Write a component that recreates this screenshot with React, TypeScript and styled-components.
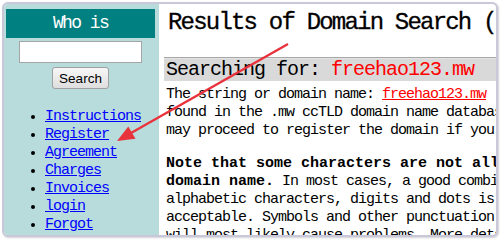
import * as React from "react";
import styled, { createGlobalStyle } from "styled-components";

const GlobalStyle = createGlobalStyle`
  html, body {
    margin: 0;
    padding: 0;
    background: #ffffff;
    width: 500px;
    height: 240px;
    overflow: hidden;
  }
`;

const MONO = `"Liberation Mono", "Courier New", monospace`;

const Frame = styled.div`
  position: relative;
  box-sizing: border-box;
  margin: 2px 0 0 2px;
  width: 496px;
  height: 235px;
  border: 2px solid #c8c8d8;
  border-radius: 6px;
  box-shadow: 1px 1px 2px rgba(120, 120, 140, 0.35);
  overflow: hidden;
  display: flex;
  background: #ffffff;
`;

const Sidebar = styled.div`
  flex: 0 0 155px;
  box-sizing: border-box;
  background: #b8dcdc;
  padding: 5px 4px 0 2px;
  display: flex;
  flex-direction: column;
  align-items: center;

  & > * {
    flex-shrink: 0;
  }
`;

const SideHeader = styled.div`
  align-self: stretch;
  height: 29px;
  background: #008080;
  color: #ffffff;
  font-family: ${MONO};
  font-size: 18px;
  letter-spacing: -1.6px;
  line-height: 29px;
  text-align: center;
  white-space: pre;
`;

const SearchInput = styled.input`
  box-sizing: border-box;
  width: 123px;
  height: 22px;
  margin: 3px 0 0 0;
  border: 1px solid #a5a5a5;
  background: #ffffff;
  padding: 0 3px;
`;

const SearchButton = styled.button`
  box-sizing: border-box;
  width: 57px;
  height: 22px;
  margin-top: 4px;
  border: 1px solid #a0a0a0;
  border-radius: 3px;
  background: linear-gradient(#f7f7f7, #dedede);
  font-family: "Liberation Sans", Arial, sans-serif;
  font-size: 13.5px;
  color: #000000;
  padding: 0;
`;

const NavList = styled.ul`
  align-self: stretch;
  margin: 19px 0 0 0;
  padding: 0 0 0 39px;
  font-family: ${MONO};
  font-size: 15px;
  letter-spacing: -1px;
  line-height: 18px;
  list-style: disc;
`;

const NavItem = styled.li`
  &::marker {
    font-size: 13px;
  }
`;

const NavLink = styled.a`
  color: #0000ff;
  text-decoration: underline;
`;

const Main = styled.div`
  flex: 1;
  min-width: 0;
  padding: 4px 0 0 5px;
  font-family: ${MONO};
  color: #000000;
`;

const Title = styled.h1`
  margin: 0 0 0 4px;
  font-size: 24px;
  font-weight: normal;
  letter-spacing: -1.8px;
  line-height: 30px;
  white-space: nowrap;
  -webkit-text-stroke: 0.3px #000000;
`;

const Rule = styled.div`
  margin-top: 19px;
  height: 1px;
  border-top: 1px solid #a8a8a8;
  background: #e2e2e2;
`;

const Band = styled.div`
  height: 22px;
  background: #d9d9d9;
  padding-left: 2px;
  font-size: 20px;
  letter-spacing: -1px;
  line-height: 22px;
  white-space: nowrap;
`;

const Red = styled.span`
  color: #ff0000;
`;

const Para = styled.div<{ $gap?: number }>`
  margin-top: ${p => p.$gap ?? 0}px;
  padding-left: 2px;
  font-size: 15px;
  letter-spacing: -1px;
  line-height: 18px;
`;

const Line = styled.div`
  white-space: nowrap;
`;

const Strong = styled.b`
  letter-spacing: 0;
`;

const RedLink = styled.a`
  color: #ff0000;
  text-decoration: underline;
`;

const Arrow = styled.svg`
  position: absolute;
  left: -4px;
  top: -4px;
  width: 500px;
  height: 240px;
  pointer-events: none;
`;

const links = [
  "Instructions",
  "Register",
  "Agreement",
  "Charges",
  "Invoices",
  "login",
  "Forgot",
  "Password"
];

export default function App() {
  return (
    <>
      <GlobalStyle />
      <Frame>
        <Sidebar>
          <SideHeader>Who is</SideHeader>
          <SearchInput type="text" />
          <SearchButton type="button">Search</SearchButton>
          <NavList>
            {links.map(l => (
              <NavItem key={l}>
                <NavLink href="#">{l}</NavLink>
              </NavItem>
            ))}
          </NavList>
        </Sidebar>
        <Main>
          <Title>Results of Domain Search (freehao123.mw)</Title>
          <Rule />
          <Band>
            Searching for: <Red>freehao123.mw</Red>
          </Band>
          <Para $gap={5}>
            <Line>
              The string or domain name: <RedLink href="#">freehao123.mw</RedLink>
            </Line>
            <Line>found in the .mw ccTLD domain name database.</Line>
            <Line>may proceed to register the domain if you wish.</Line>
          </Para>
          <Para $gap={15}>
            <Line>
              <Strong>Note that some characters are not allowed in a</Strong>
            </Line>
            <Line>
              <Strong>domain name.</Strong> In most cases, a good combination of
            </Line>
            <Line>alphabetic characters, digits and dots is</Line>
            <Line>acceptable. Symbols and other punctuation</Line>
            <Line>will most likely cause problems. More details</Line>
          </Para>
        </Main>
        <Arrow viewBox="0 0 500 240">
          <line x1="288" y1="44" x2="131" y2="133" stroke="#e8323c" strokeWidth="2.4" />
          <polygon points="117,141 135.5,138.7 128.3,126.5" fill="#e8323c" />
        </Arrow>
      </Frame>
    </>
  );
}
